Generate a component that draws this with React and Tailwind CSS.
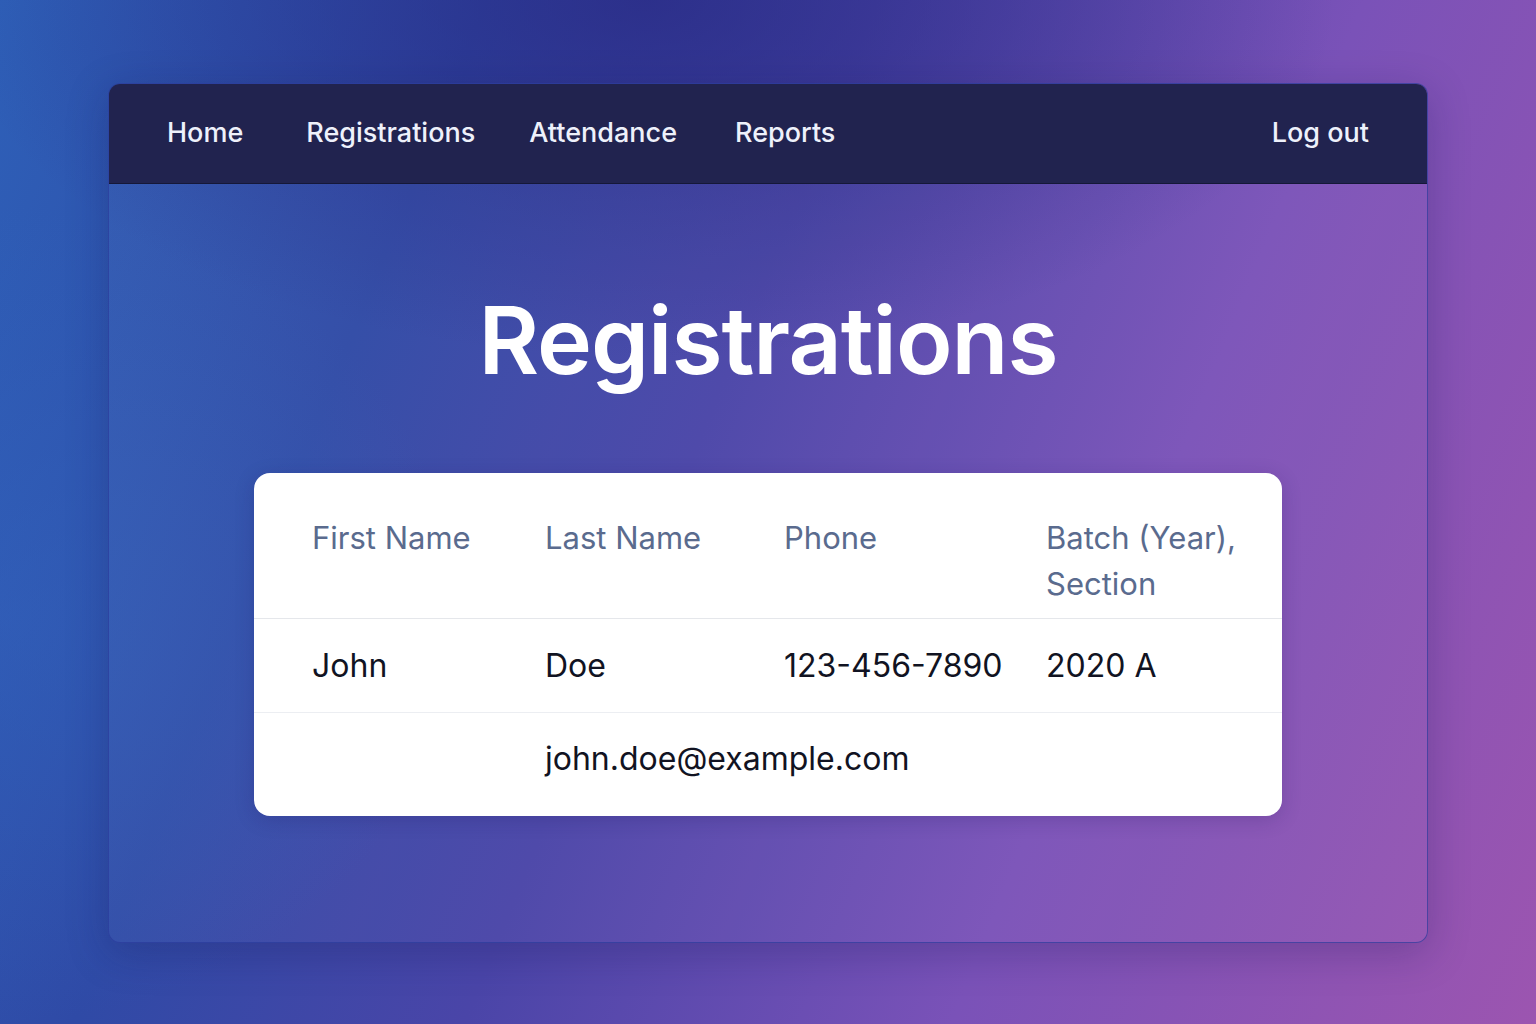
import React from "react";

const navLinks = [
  { label: "Home", gap: "" },
  { label: "Registrations", gap: "ml-[63px]" },
  { label: "Attendance", gap: "ml-[54px]" },
  { label: "Reports", gap: "ml-[58px]" },
];

const headers = ["First Name", "Last Name", "Phone", "Batch (Year), Section"];

const student = {
  firstName: "John",
  lastName: "Doe",
  phone: "123-456-7890",
  batch: "2020 A",
  email: "john.doe@example.com",
};

const App = () => {
  return (
    <div
      className="min-h-screen w-full bg-[#3f4aa8] relative overflow-hidden"
      style={{ fontFamily: "Inter, 'Noto Sans', sans-serif" }}
    >
      <div className="absolute inset-0 bg-[linear-gradient(112deg,#2e60b8_0%,#2f4aa6_25%,#4a45a8_45%,#7a52b8_70%,#9c55b0_100%)]" />
      <div className="absolute inset-0 bg-[radial-gradient(ellipse_45%_35%_at_42%_0%,rgba(40,40,130,0.75),rgba(40,40,130,0)_100%)]" />
      <div className="absolute inset-0 bg-[radial-gradient(ellipse_30%_40%_at_0%_60%,rgba(50,100,190,0.5),rgba(50,100,190,0)_100%)]" />

      <div className="relative pt-[83px] px-[108px]">
        <div className="h-[860px] rounded-[12px] border border-[#2a3a9a]/70 bg-white/[0.03] shadow-[0_10px_40px_rgba(20,20,80,0.25)] overflow-hidden flex flex-col">
          <nav className="h-[100px] shrink-0 bg-[#21234f] border-b border-[#151838] flex items-center justify-between pl-[58px] pr-[58px]">
            <div className="flex items-center">
              {navLinks.map((link) => (
                <a
                  key={link.label}
                  href="#"
                  className={`text-[27px] font-medium text-[#eef1fb] ${link.gap}`}
                >
                  {link.label}
                </a>
              ))}
            </div>
            <a href="#" className="text-[27px] font-medium text-[#eef1fb]">
              Log out
            </a>
          </nav>

          <div className="flex flex-col items-center">
            <h1 className="mt-[100px] text-[93px] leading-[112px] font-semibold text-white tracking-[-1px]">
              Registrations
            </h1>

            <div className="mt-[77px] w-[1028px] bg-white rounded-[16px] overflow-hidden shadow-[0_4px_20px_rgba(30,20,90,0.2)]">
              <div className="grid grid-cols-[291px_239px_262px_236px] h-[146px] border-b border-[#e5e7eb] pt-[42px]">
                {headers.map((h, i) => (
                  <div
                    key={h}
                    className={`text-[31px] leading-[46px] text-[#5a6b8e] ${i === 0 ? "pl-[58px]" : ""}`}
                  >
                    {h}
                  </div>
                ))}
              </div>
              <div className="grid grid-cols-[291px_239px_262px_236px] h-[94px] items-center border-b border-[#eceef2] text-[32px] text-[#111322]">
                <div className="pl-[58px]">{student.firstName}</div>
                <div>{student.lastName}</div>
                <div>{student.phone}</div>
                <div>{student.batch}</div>
              </div>
              <div className="grid grid-cols-[291px_737px] h-[103px] items-center text-[32px] text-[#111322]">
                <div />
                <div className="pb-[12px]">{student.email}</div>
              </div>
            </div>
          </div>
        </div>
      </div>
    </div>
  );
};

export default App;
